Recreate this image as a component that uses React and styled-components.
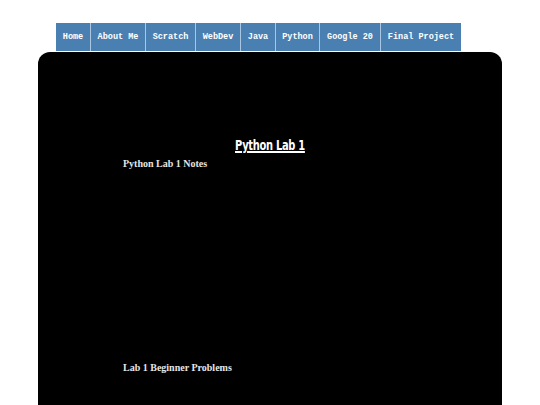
import React from 'react';
import styled, { createGlobalStyle } from 'styled-components';

const Global = createGlobalStyle`
  html, body {
    margin: 0;
    padding: 0;
    background: #ffffff;
  }
`;

const Page = styled.div`
  min-height: 405px;
  display: flex;
  flex-direction: column;
  padding-top: 23px;
  box-sizing: border-box;
  overflow: hidden;
`;

const Nav = styled.nav`
  display: flex;
  margin-left: 56px;
  height: 28px;
`;

const NavItem = styled.a`
  display: flex;
  align-items: center;
  justify-content: center;
  width: ${p => p.w}px;
  box-sizing: border-box;
  background: #4a7fb2;
  border-left: ${p => (p.first ? 'none' : '1px solid #a9c6e2')};
  color: #ffffff;
  font-family: "Liberation Mono", "Courier New", monospace;
  font-weight: bold;
  font-size: 8.5px;
  text-decoration: none;
  white-space: nowrap;
`;

const Panel = styled.main`
  flex: 1;
  margin: 1px 38px 0;
  min-height: 352px;
  background: #000000;
  border-radius: 12px 12px 0 0;
  padding: 85px 85px 0;
  box-sizing: border-box;
`;

const Title = styled.h1`
  margin: 0;
  text-align: center;
  line-height: 16px;
  font-size: 14.5px;
`;

const TitleText = styled.span`
  display: inline-block;
  color: #ffffff;
  font-family: "DejaVu Sans Condensed", "Liberation Sans Narrow", sans-serif;
  font-weight: bold;
  font-size: 14.5px;
  line-height: 16px;
  letter-spacing: -0.4px;
  text-decoration: underline;
  text-decoration-thickness: 1.5px;
  text-underline-offset: 1px;
  transform: scaleX(0.76);
`;

const Section = styled.h3`
  margin: ${p => p.top || 0}px 0 0;
  color: #e6e6e6;
  font-family: "Liberation Serif", "Times New Roman", serif;
  font-weight: bold;
  font-size: 10px;
  line-height: 12px;
`;

const NotesFrame = styled.div`
  height: 192px;
`;

const links = [
  ['Home', 34],
  ['About Me', 55],
  ['Scratch', 50],
  ['WebDev', 45],
  ['Java', 35],
  ['Python', 44],
  ['Google 20', 61],
  ['Final Project', 81],
];

export default function App() {
  return (
    <Page>
      <Global />
      <Nav>
        {links.map(([label, w], i) => (
          <NavItem key={label} w={w} first={i === 0} href="#">
            {label}
          </NavItem>
        ))}
      </Nav>
      <Panel>
        <Title>
          <TitleText>Python Lab 1</TitleText>
        </Title>
        <Section top={5}>Python Lab 1 Notes</Section>
        <NotesFrame />
        <Section>Lab 1 Beginner Problems</Section>
      </Panel>
    </Page>
  );
}
